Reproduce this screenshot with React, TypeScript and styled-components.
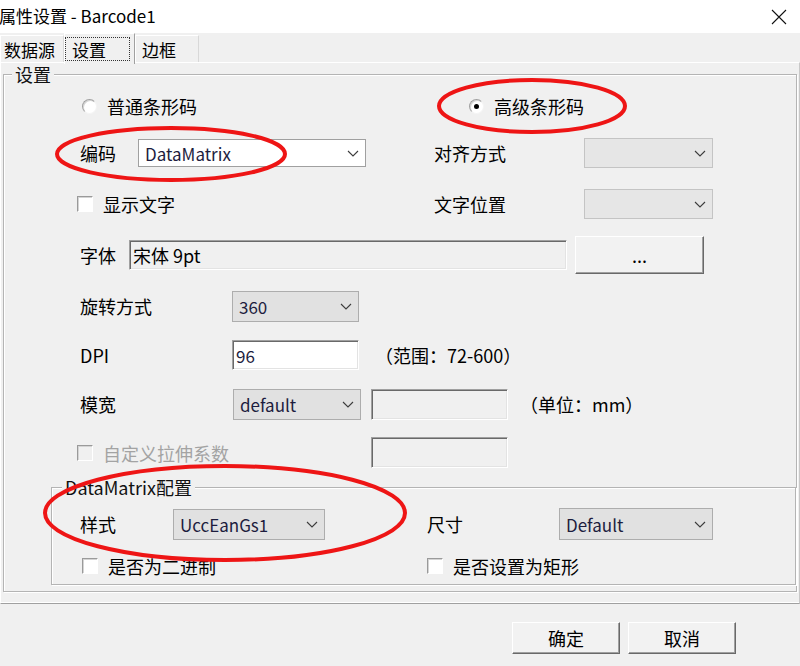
import React from 'react';
import styled, { createGlobalStyle } from 'styled-components';

const GlobalStyle = createGlobalStyle`
  html, body {
    margin: 0;
    padding: 0;
    background: #f0f0f0;
  }
  body {
    font-family: "Noto Sans CJK SC", "Liberation Sans", sans-serif;
    color: #000;
  }
`;

const Dialog = styled.div`
  position: relative;
  width: 800px;
  height: 666px;
  overflow: hidden;
  background: #f0f0f0;
`;

const TitleBar = styled.div`
  height: 33px;
  background: #fff;
  display: flex;
  align-items: center;
  justify-content: space-between;
  padding-right: 13px;
  box-sizing: border-box;
`;

const Title = styled.span`
  font-size: 17px;
  line-height: 1;
  margin-left: -1px;
  padding-bottom: 2px;
`;

const TabStrip = styled.div`
  height: 29px;
  display: flex;
  align-items: flex-end;
`;

const Tab = styled.div<{ $w: number; $pl: number; $active?: boolean }>`
  position: relative;
  z-index: ${(p) => (p.$active ? 2 : 0)};
  box-sizing: border-box;
  width: ${(p) => p.$w}px;
  height: ${(p) => (p.$active ? 31 : 27)}px;
  margin-bottom: ${(p) => (p.$active ? -2 : 0)}px;
  padding-left: ${(p) => p.$pl}px;
  display: flex;
  align-items: center;
  background: #f0f0f0;
  border-top: 1px solid #fff;
  border-left: 1px solid #fff;
  border-right: 1px solid ${(p) => (p.$active ? '#a0a0a0' : '#d8d8d8')};
  font-size: 17px;
  line-height: 1;
`;

const FocusRect = styled.span`
  box-sizing: border-box;
  width: 65px;
  height: 24px;
  padding: 0 6px;
  margin-left: -2px;
  display: flex;
  align-items: center;
  border: 1px dotted #333;
`;

const TabPanel = styled.div`
  box-sizing: border-box;
  height: 542px;
  padding: 0 2px;
  border-top: 1px solid #fff;
  border-left: 1px solid #fff;
  border-right: 1px solid #c8c8c8;
  border-bottom: 1px solid #a0a0a0;
  box-shadow: inset 0 -1px 0 #fff;
`;

const GroupBox = styled.fieldset`
  margin: 0;
  padding: 0;
  min-width: 0;
  border: 1px solid #b4b4b4;
  box-shadow: 1px 1px 0 #fff, inset 1px 1px 0 #fff;
`;

const Legend = styled.legend<{ $x: number }>`
  margin-left: ${(p) => p.$x}px;
  padding: 0 3px;
  height: 22px;
  line-height: 22px;
  font-size: 18px;
  background: #f0f0f0;
  color: #111;
`;

const GroupBody = styled.div<{ $pl: number; $pb: number }>`
  padding-left: ${(p) => p.$pl}px;
  padding-bottom: ${(p) => p.$pb}px;
`;

const Row = styled.div<{ $h: number; $indent?: number }>`
  display: flex;
  align-items: center;
  height: ${(p) => p.$h}px;
  padding-left: ${(p) => p.$indent ?? 29}px;
`;

const Label = styled.span<{ $w?: number; $muted?: boolean }>`
  flex-shrink: 0;
  width: ${(p) => (p.$w ? `${p.$w}px` : 'auto')};
  font-size: 18px;
  line-height: 1;
  white-space: nowrap;
  color: ${(p) => (p.$muted ? '#a3a3a3' : '#000')};
`;

const Gap = styled.span<{ $w: number }>`
  flex-shrink: 0;
  width: ${(p) => p.$w}px;
`;

const Option = styled.label<{ $w?: number }>`
  flex-shrink: 0;
  display: flex;
  align-items: center;
  gap: 10px;
  width: ${(p) => (p.$w ? `${p.$w}px` : 'auto')};
`;

const Radio = styled.span<{ $checked?: boolean; $x: number }>`
  box-sizing: border-box;
  width: 15px;
  height: 15px;
  margin-left: ${(p) => p.$x}px;
  border-radius: 50%;
  border: 1px solid;
  border-color: #a0a0a0 #f4f4f4 #f4f4f4 #a0a0a0;
  box-shadow: inset 1px 1px 0 #d6d6d6;
  background: #fff;
  display: flex;
  align-items: center;
  justify-content: center;

  &::after {
    content: '';
    display: ${(p) => (p.$checked ? 'block' : 'none')};
    width: 5px;
    height: 5px;
    border-radius: 50%;
    background: #000;
  }
`;

const CheckBox = styled.span<{ $x: number; $disabled?: boolean }>`
  box-sizing: border-box;
  width: 16px;
  height: 16px;
  margin-left: ${(p) => p.$x}px;
  border: 1px solid;
  border-color: #9a9a9a #fff #fff #9a9a9a;
  box-shadow: inset 1px 1px 0 #d4d4d4;
  background: ${(p) => (p.$disabled ? '#f0f0f0' : '#fff')};
`;

const Combo = styled.div<{ $w: number; $h: number; $variant: 'edit' | 'list' | 'off' }>`
  flex-shrink: 0;
  box-sizing: border-box;
  width: ${(p) => p.$w}px;
  height: ${(p) => p.$h}px;
  padding: 0 6px;
  display: flex;
  align-items: center;
  justify-content: space-between;
  border: 1px solid
    ${(p) => (p.$variant === 'edit' ? '#a0a0a0' : p.$variant === 'list' ? '#adadad' : '#c4c4c4')};
  background: ${(p) => (p.$variant === 'edit' ? '#fff' : p.$variant === 'list' ? '#e1e1e1' : '#e6e6e6')};
`;

const Value = styled.span`
  font-size: 17px;
  line-height: 1;
  color: #1d1d3e;
  white-space: nowrap;
`;

const Sunken = styled.div<{ $w: number; $h: number; $white?: boolean }>`
  flex-shrink: 0;
  box-sizing: border-box;
  width: ${(p) => p.$w}px;
  height: ${(p) => p.$h}px;
  padding-left: 3px;
  display: flex;
  align-items: center;
  border: 1px solid;
  border-color: #a0a0a0 #fff #fff #a0a0a0;
  box-shadow: inset 1px 1px 0 #696969, inset -1px -1px 0 #e3e3e3;
  background: ${(p) => (p.$white ? '#fff' : '#f0f0f0')};
`;

const RaisedButton = styled.button<{ $w: number; $h: number }>`
  flex-shrink: 0;
  box-sizing: border-box;
  width: ${(p) => p.$w}px;
  height: ${(p) => p.$h}px;
  padding: 0;
  border: 1px solid;
  border-color: #fff #696969 #696969 #fff;
  box-shadow: inset -1px -1px 0 #a0a0a0;
  background: #f2f2f2;
  font-family: inherit;
  font-size: 18px;
  line-height: 1;
  color: #000;
`;

const Footer = styled.div`
  display: flex;
  justify-content: flex-end;
  gap: 8px;
  padding: 18px 64px 0 0;
`;

const Marks = styled.svg`
  position: absolute;
  left: 0;
  top: 0;
  pointer-events: none;
`;

const Chevron = () => (
  <svg width="12" height="7" viewBox="0 0 12 7">
    <path d="M1 1 L6 6 L11 1" fill="none" stroke="#3c3c3c" strokeWidth="1.1" />
  </svg>
);

const CloseIcon = () => (
  <svg width="16" height="16" viewBox="0 0 16 16">
    <path d="M1 1 L15 15 M15 1 L1 15" stroke="#111" strokeWidth="1.1" />
  </svg>
);

const App: React.FC = () => (
  <Dialog>
    <GlobalStyle />

    <TitleBar>
      <Title>属性设置 - Barcode1</Title>
      <CloseIcon />
    </TitleBar>

    <TabStrip>
      <Tab $w={64} $pl={3}>数据源</Tab>
      <Tab $w={71} $pl={2} $active>
        <FocusRect>设置</FocusRect>
      </Tab>
      <Tab $w={64} $pl={6}>边框</Tab>
    </TabStrip>

    <TabPanel>
      <GroupBox>
        <Legend $x={8}>设置</Legend>
        <GroupBody $pl={47} $pb={6}>
          <Row $h={42}>
            <Option $w={389}>
              <Radio $x={2} />
              <Label>普通条形码</Label>
            </Option>
            <Option>
              <Radio $x={0} $checked />
              <Label>高级条形码</Label>
            </Option>
          </Row>

          <Row $h={52}>
            <Label $w={58}>编码</Label>
            <Combo $w={228} $h={28} $variant="edit">
              <Value>DataMatrix</Value>
              <Chevron />
            </Combo>
            <Gap $w={68} />
            <Label $w={150}>对齐方式</Label>
            <Combo $w={129} $h={30} $variant="off">
              <span />
              <Chevron />
            </Combo>
          </Row>

          <Row $h={50}>
            <Option $w={354}>
              <CheckBox $x={-3} />
              <Label>显示文字</Label>
            </Option>
            <Label $w={150}>文字位置</Label>
            <Combo $w={129} $h={30} $variant="off">
              <span />
              <Chevron />
            </Combo>
          </Row>

          <Row $h={52}>
            <Label $w={49}>字体</Label>
            <Sunken $w={438} $h={30}>
              <Label>宋体 9pt</Label>
            </Sunken>
            <Gap $w={8} />
            <RaisedButton $w={129} $h={38}>...</RaisedButton>
          </Row>

          <Row $h={50}>
            <Label $w={152}>旋转方式</Label>
            <Combo $w={127} $h={31} $variant="list">
              <Value>360</Value>
              <Chevron />
            </Combo>
          </Row>

          <Row $h={48}>
            <Label $w={152}>DPI</Label>
            <Sunken $w={127} $h={30} $white>
              <Value>96</Value>
            </Sunken>
            <Gap $w={16} />
            <Label>（范围：72-600）</Label>
          </Row>

          <Row $h={50}>
            <Label $w={153}>模宽</Label>
            <Combo $w={128} $h={31} $variant="list">
              <Value>default</Value>
              <Chevron />
            </Combo>
            <Gap $w={10} />
            <Sunken $w={137} $h={31} />
            <Gap $w={12} />
            <Label>（单位：mm）</Label>
          </Row>

          <Row $h={47}>
            <Option $w={291}>
              <CheckBox $x={-3} $disabled />
              <Label $muted>自定义拉伸系数</Label>
            </Option>
            <Sunken $w={137} $h={31} />
          </Row>

          <GroupBox>
            <Legend $x={10}>DataMatrix配置</Legend>
            <GroupBody $pl={0} $pb={2}>
              <Row $h={52} $indent={28}>
                <Label $w={93}>样式</Label>
                <Combo $w={152} $h={31} $variant="list">
                  <Value>UccEanGs1</Value>
                  <Chevron />
                </Combo>
                <Gap $w={102} />
                <Label $w={132}>尺寸</Label>
                <Combo $w={154} $h={32} $variant="list">
                  <Value>Default</Value>
                  <Chevron />
                </Combo>
              </Row>
              <Row $h={32} $indent={28}>
                <Option $w={347}>
                  <CheckBox $x={2} />
                  <Label>是否为二进制</Label>
                </Option>
                <Option>
                  <CheckBox $x={0} />
                  <Label>是否设置为矩形</Label>
                </Option>
              </Row>
            </GroupBody>
          </GroupBox>
        </GroupBody>
      </GroupBox>
    </TabPanel>

    <Footer>
      <RaisedButton $w={108} $h={32}>确定</RaisedButton>
      <RaisedButton $w={108} $h={32}>取消</RaisedButton>
    </Footer>

    <Marks width="800" height="666" viewBox="0 0 800 666">
      <g fill="none" stroke="#ee1515" strokeWidth="4">
        <ellipse cx="532" cy="106" rx="93" ry="26" />
        <ellipse cx="171" cy="154" rx="114" ry="26" />
        <ellipse cx="225" cy="513" rx="180" ry="47" />
      </g>
    </Marks>
  </Dialog>
);

export default App;
